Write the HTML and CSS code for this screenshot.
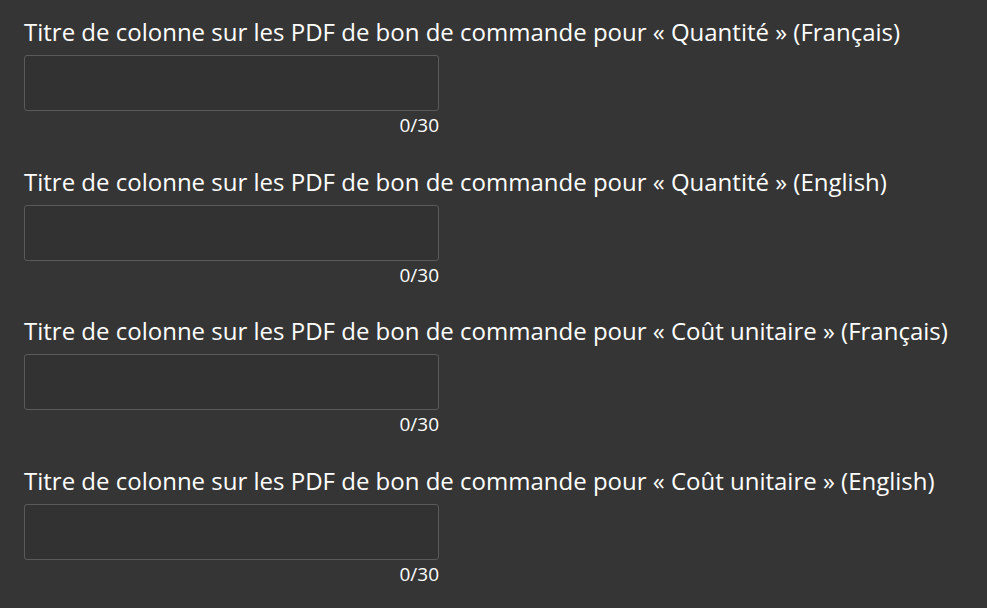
FILE: index.html
```html
<!DOCTYPE html>
<html lang="fr">
<head>
<meta charset="utf-8">
<link rel="stylesheet" href="styles.css">
</head>
<body>
<div class="form">
  <div class="field">
    <label class="label">Titre de colonne sur les PDF de bon de commande pour « Quantité » (Français)</label>
    <div class="input"></div>
    <div class="counter">0/30</div>
  </div>
  <div class="field">
    <label class="label">Titre de colonne sur les PDF de bon de commande pour « Quantité » (English)</label>
    <div class="input"></div>
    <div class="counter">0/30</div>
  </div>
  <div class="field">
    <label class="label">Titre de colonne sur les PDF de bon de commande pour « Coût unitaire » (Français)</label>
    <div class="input"></div>
    <div class="counter">0/30</div>
  </div>
  <div class="field">
    <label class="label">Titre de colonne sur les PDF de bon de commande pour « Coût unitaire » (English)</label>
    <div class="input"></div>
    <div class="counter">0/30</div>
  </div>
</div>
</body>
</html>
```
FILE: styles.css
```css
html, body {
  margin: 0;
  padding: 0;
  background: #353535;
  color: #ffffff;
  font-family: "Open Sans", "Noto Sans", sans-serif;
}
.form {
  display: flex;
  flex-direction: column;
  gap: 28.7px;
  padding: 16px 24px;
}
.field {
  display: flex;
  flex-direction: column;
  width: 415px;
}
.label {
  display: block;
  font-size: 24px;
  line-height: 32px;
  white-space: nowrap;
  margin-bottom: 7px;
}
.input {
  box-sizing: border-box;
  height: 56px;
  border: 1px solid #5a5a5a;
  border-radius: 3px;
  background: #323232;
}
.counter {
  margin-top: 2px;
  text-align: right;
  font-size: 19px;
  line-height: 24px;
}
```
